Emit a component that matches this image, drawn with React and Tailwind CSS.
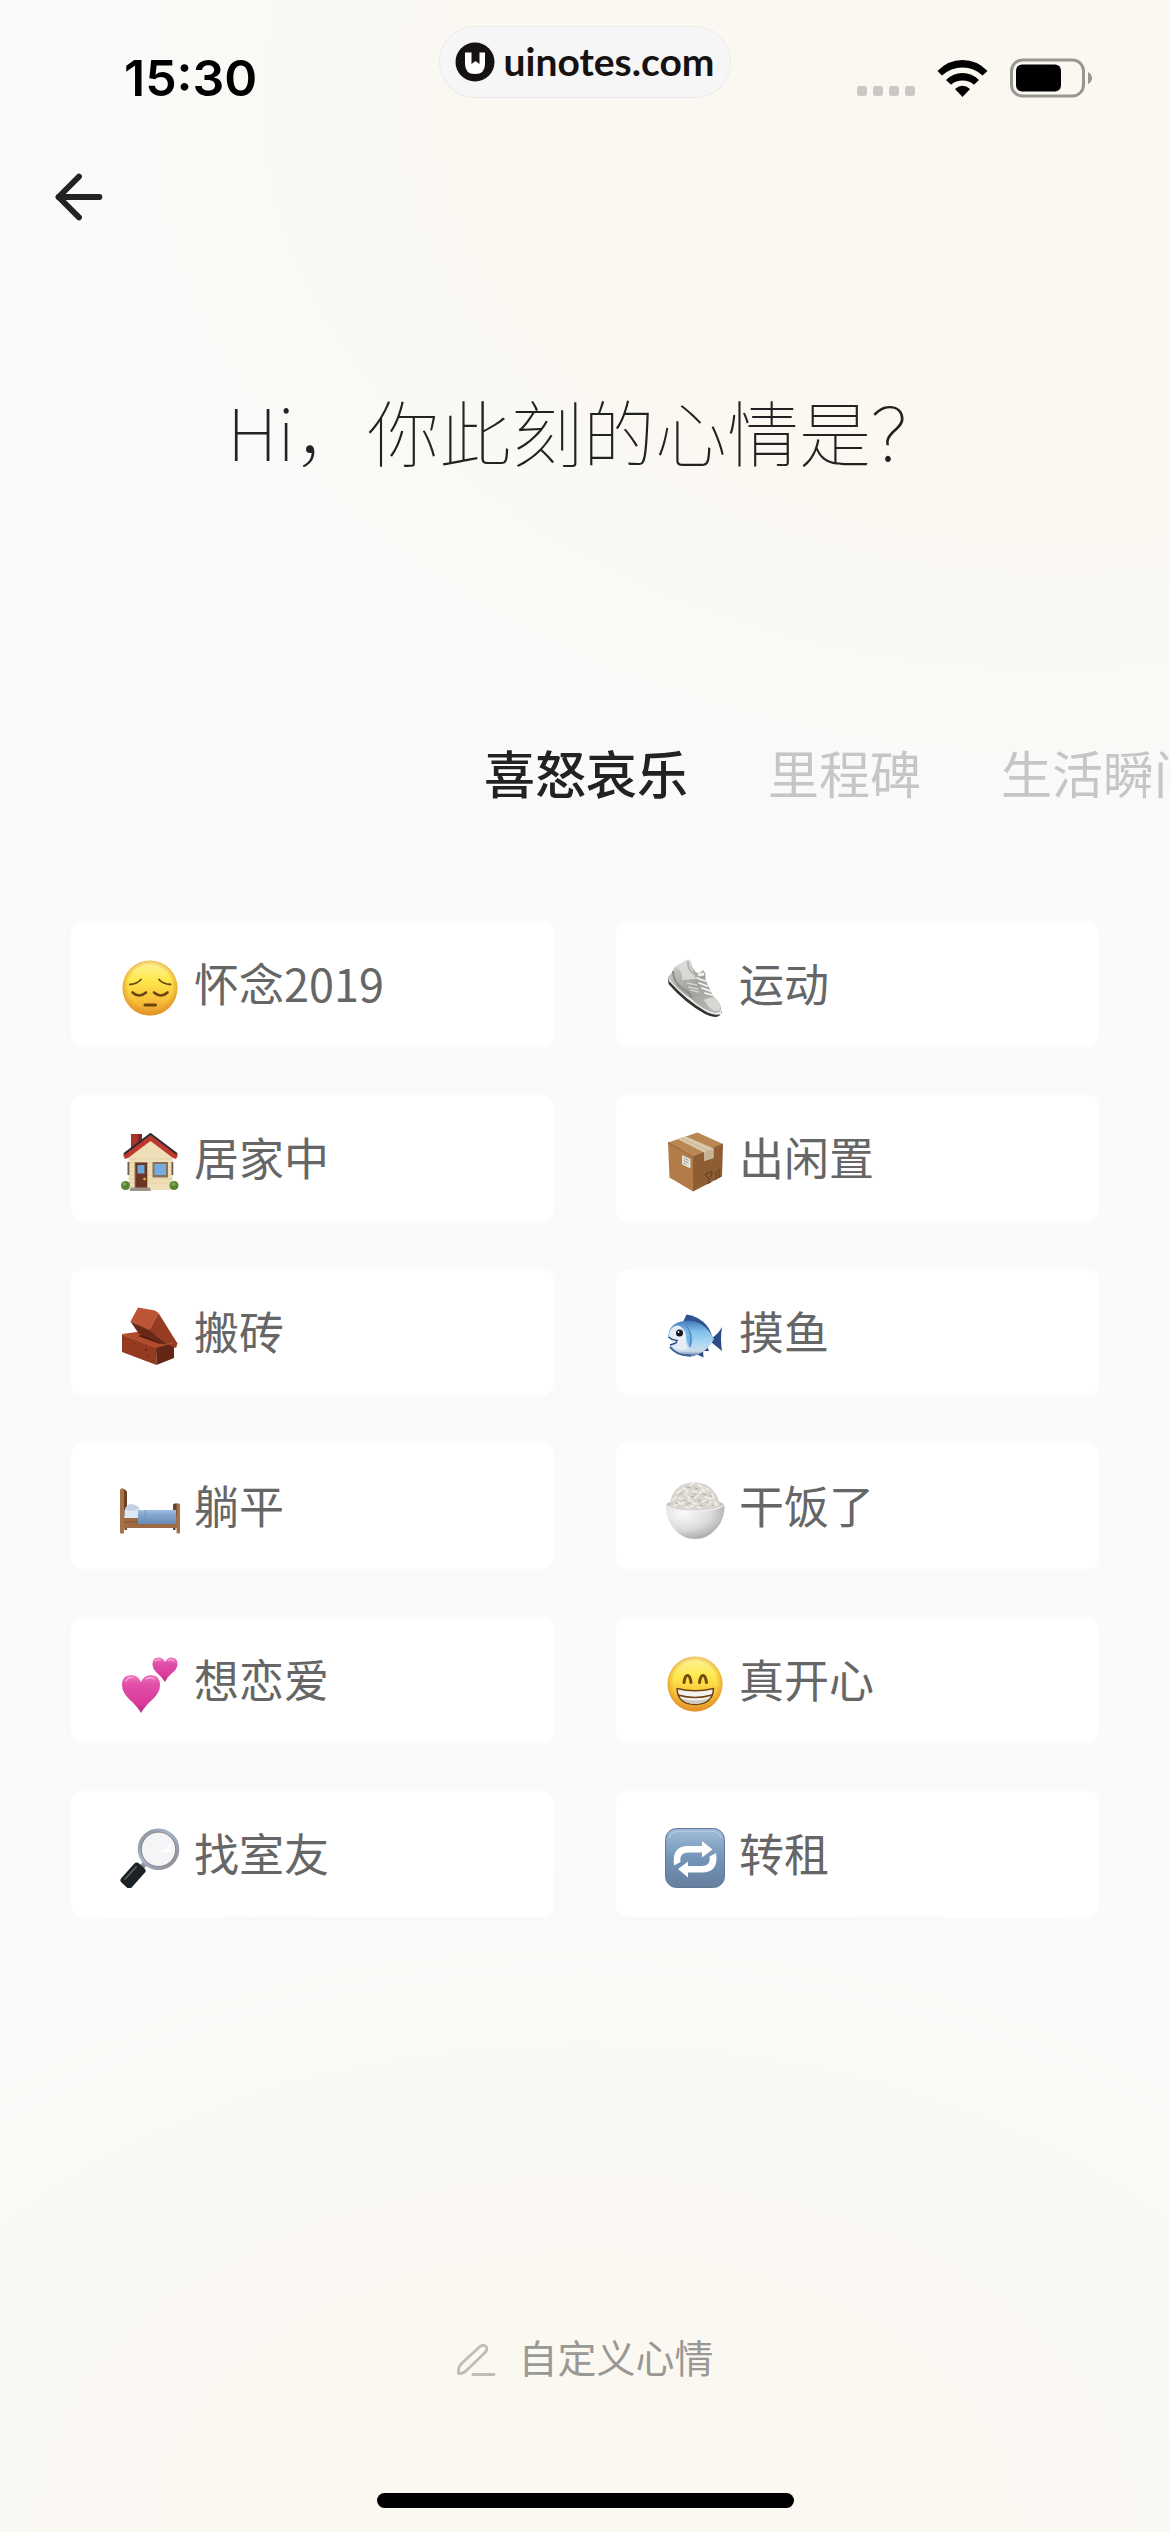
import { useState } from "react";
import { ArrowLeft } from "lucide-react";

function FaceBase({ id }) {
  return (
    <>
      <defs>
        <linearGradient id={id} x1="0" y1="0" x2="0" y2="1">
          <stop offset="0" stopColor="#fdf3a0" />
          <stop offset="0.35" stopColor="#fde94e" />
          <stop offset="0.7" stopColor="#f8c43a" />
          <stop offset="1" stopColor="#e8982c" />
        </linearGradient>
        <radialGradient id={`${id}-edge`} cx="0.5" cy="0.48" r="0.52">
          <stop offset="0.75" stopColor="#e39a2c" stopOpacity="0" />
          <stop offset="1" stopColor="#df922a" stopOpacity="0.8" />
        </radialGradient>
      </defs>
      <circle cx="30" cy="30" r="27.5" fill={`url(#${id})`} />
      <circle cx="30" cy="30" r="27.5" fill={`url(#${id}-edge)`} />
    </>
  );
}

function PensiveFace() {
  return (
    <>
      <FaceBase id="pensive" />
      <g fill="none" stroke="#6b4410" strokeLinecap="round">
        <path d="M10 26.5Q17 26 21 21.5M50.5 26.5Q43 26 39 21.5" strokeWidth="1.8" />
        <path d="M12.5 34.5Q19 40.5 26 34.5M34 34.5Q41 40.5 47.5 34.5" strokeWidth="2.6" />
        <path d="M25 47H35.5" strokeWidth="3" />
      </g>
    </>
  );
}

function Grin() {
  return (
    <>
      <FaceBase id="grin" />
      <path
        d="M19 28.5Q20 21.5 22.5 21.5Q25 21.5 26 28.5M34.5 28.5Q35.5 21.5 38 21.5Q40.5 21.5 41.5 28.5"
        fill="none"
        stroke="#76490f"
        strokeWidth="3"
        strokeLinecap="round"
      />
      <path
        d="M12 34.5Q30 39 48.5 34.5Q48 50 30 50.5Q12.5 50 12 34.5Z"
        fill="#f3f2ee"
        stroke="#6d4313"
        strokeWidth="1.5"
        strokeLinejoin="round"
      />
      <path d="M15 44Q30 56 45 44Q30 49 15 44Z" fill="#cfcbc3" />
      <path d="M13 41Q30 46 47 41" fill="none" stroke="#6d4313" strokeWidth="1.5" />
    </>
  );
}

function Shoe() {
  return (
    <>
      <defs>
        <linearGradient id="shoe" x1="0" y1="0" x2="1" y2="1">
          <stop offset="0" stopColor="#cfcfcc" />
          <stop offset="0.5" stopColor="#a3a19c" />
          <stop offset="1" stopColor="#bfbebb" />
        </linearGradient>
      </defs>
      <path d="M3 20L3.5 26Q20 45 40 56Q49 60.5 54 58L57 54Z" fill="#333" />
      <path d="M3 18L4 23Q20 41 40 53Q50 58.5 56 56L56.5 50Z" fill="#f0f0ef" />
      <path
        d="M23.5 1.5Q18 4 10 9Q7 15 3 19Q10 30 25 40Q39 53 50 55Q57 55 56 49Q54 43 48.5 39L40.5 22Q41 14 38 12Q36 15 33 15.5Q27 12 26 4Z"
        fill="url(#shoe)"
      />
      <path d="M23.5 1.5Q16 4 11 9Q18 14 17 22L31 21L28 13Q25 8 26 4Z" fill="#d9d9d7" />
      <path d="M23 3Q22 13 31 17" fill="none" stroke="#b0aeab" strokeWidth="1.5" />
      <path d="M8 13Q8 24 18 31Q24 34 27 40" fill="none" stroke="#8d8b87" strokeWidth="2" />
      <path d="M39 42Q44 39 48.5 40Q56 44 55.5 50Q55 53 50 53Q44 51 39 42Z" fill="#d9d8d6" />
      <path d="M22 25L32 27M23 29L33 31M25 32L34 34" stroke="#d5d4d1" strokeWidth="1.7" />
      <path d="M32 20L40 23M34 25L42 28M37 30L45 33M40 35L47 37" stroke="#f6f6f5" strokeWidth="1.8" strokeLinecap="round" />
      <path d="M33 17L39 16" stroke="#f1f1f0" strokeWidth="3" />
    </>
  );
}

function House() {
  return (
    <>
      <rect x="11" y="2" width="11" height="18" fill="#a8352c" />
      <rect x="18" y="2" width="4" height="18" fill="#842720" />
      <path d="M8.5 22L30.5 6L52.5 22V58H8.5Z" fill="#efdfb9" />
      <path d="M9 27H52M9 31H52M9 35H52M9 39H52M9 43H52M9 47H52M9 51H52" stroke="#decca2" strokeWidth="0.7" />
      <path d="M30.5 3L3 23L5 27L8 26L30.5 9L53 26L56 27L58 23Z" fill="#c0392f" />
      <path d="M4 22L30.5 2L57 22" fill="none" stroke="#2b282c" strokeWidth="2" />
      <rect x="7.5" y="30" width="1.8" height="13" fill="#6c5a49" />
      <rect x="51.5" y="30" width="1.8" height="13" fill="#6c5a49" />
      <rect x="14.5" y="30" width="13" height="26" fill="#9a7c5d" />
      <rect x="15.5" y="31" width="11.5" height="25" fill="#6b3524" />
      <rect x="17.5" y="33" width="7" height="8.5" fill="#6aa6dc" />
      <circle cx="24.5" cy="47" r="1.3" fill="#f0b13f" />
      <rect x="32.5" y="30" width="15.5" height="15.5" fill="#8c7157" />
      <rect x="34.5" y="32" width="11.5" height="11" fill="#72abe0" />
      <circle cx="5.5" cy="53.5" r="4.5" fill="#568433" />
      <circle cx="4.5" cy="52" r="2" fill="#7aa74c" />
      <circle cx="54" cy="53.5" r="4.5" fill="#568433" />
      <circle cx="53.5" cy="52" r="2" fill="#7aa74c" />
      <path d="M11 55.5H30L31 59H9.5Z" fill="#9c938b" />
    </>
  );
}

function Package() {
  return (
    <>
      <path d="M32.5 0.5L58 12L28 25L3 10.5Z" fill="#b98753" />
      <path d="M3 10.5L28 25V59.5L4.5 45.5Z" fill="#b17c48" />
      <path d="M28 25L58 12L57 44.5L28 59.5Z" fill="#8e5d33" />
      <path d="M3 10.5L28 25L58 12" fill="none" stroke="#84552d" strokeWidth="0.8" />
      <path d="M12.5 7L21 4.5L48.5 16.5V26L39 29V20.5Z" fill="#dac9ae" />
      <path d="M16 6L43.5 19" stroke="#c6b394" strokeWidth="1" />
      <path d="M39 20.5L48.5 16.5V26L39 29Z" fill="#c7b393" />
      <path d="M17 23L25.5 27V36.5L17 32.5Z" fill="#e5e2dc" />
      <path d="M18.5 26L23.5 28.5M18.5 28.5L23.5 31M18.5 31L21.5 32.5" stroke="#9a948b" strokeWidth="0.9" />
      <g fill="none" stroke="#5f3d20" strokeWidth="1">
        <path d="M40.5 42L47 39Q47 45 44 46L43.7 51M41.5 52L46 50M40.5 42Q41 46 44 46" />
        <path d="M51 39V48M54 37V46" />
      </g>
    </>
  );
}

function Brick() {
  return (
    <>
      <path d="M2 28L17 26L54 36L36 42Z" fill="#b14b2d" />
      <path d="M2 28L36 41.5L36.5 59L2 46Z" fill="#933a21" />
      <path d="M36 41.5L54 35.5V52L36.5 59Z" fill="#652615" />
      <path d="M18 30L24 28L45 36L40 38Z" fill="#4f1d10" />
      <path d="M10.5 15.5L29 23L49 40L38 36L19 28Z" fill="#6a2817" />
      <path d="M18 1.5L35 4.5L38.5 7L29 24L10.5 15.5Z" fill="#bc5535" />
      <path d="M38.5 7L57.5 37.5L56 42L47 38L29 24Z" fill="#963c23" />
      <path d="M3 29L36 41.5L53 36.5" fill="none" stroke="#b95a3a" strokeWidth="0.8" />
      <circle cx="26" cy="44" r="0.9" fill="#5d2112" />
      <circle cx="15" cy="38" r="0.7" fill="#5d2112" />
      <circle cx="28" cy="50" r="0.8" fill="#5d2112" />
    </>
  );
}

function Fish() {
  return (
    <>
      <defs>
        <linearGradient id="fish" x1="0" y1="0" x2="0" y2="1">
          <stop offset="0" stopColor="#4479b8" />
          <stop offset="0.3" stopColor="#82bfeb" />
          <stop offset="0.65" stopColor="#b0daf4" />
          <stop offset="0.85" stopColor="#cfdcec" />
          <stop offset="1" stopColor="#45679f" />
        </linearGradient>
      </defs>
      <path d="M17 18L21.5 8.5Q42 12 47.5 31L42 32Z" fill="#2f5490" />
      <path d="M46 32Q52 30 57 21Q55 33 57 45Q51 40 46 36Z" fill="#2d4c84" />
      <path d="M29 47L38.5 51.5L38 45L44 45L42 40Z" fill="#2d4c84" />
      <path d="M3 30Q4 17 19 15Q38 12 49 33Q41 48 26 50.5Q10 51 4.5 40L10 37Q5 35 3 30Z" fill="url(#fish)" />
      <path d="M4 29Q5 21 12 19.5Q19 20 21 30Q20 40 24 42Q16 47 6.5 40L12 38Q6 35 4 29Z" fill="#e8edf4" />
      <path d="M22 20Q29 26 27 37Q26 41 24 41Q20 31 22 20Z" fill="#71b3e2" />
      <path d="M21.5 20Q28 28 25 41" fill="none" stroke="#4879ad" strokeWidth="1" />
      <path d="M3.5 31Q7 34 12 34.5L11 37L5 39" fill="none" stroke="#2d4977" strokeWidth="1.5" />
      <path d="M5 41Q12 50 26 49.5" fill="none" stroke="#3c5e96" strokeWidth="2" />
      <circle cx="14.5" cy="27" r="3.5" fill="#111721" />
      <circle cx="13.5" cy="26" r="0.9" fill="#fff" />
    </>
  );
}

function Bed() {
  return (
    <>
      <defs>
        <linearGradient id="blanket" x1="0" y1="0" x2="0" y2="1">
          <stop offset="0" stopColor="#a3bfe0" />
          <stop offset="0.3" stopColor="#86a7ce" />
          <stop offset="1" stopColor="#668cb9" />
        </linearGradient>
      </defs>
      <path d="M1 8.5Q5 8 7 12V36H1Z" fill="#6b4126" />
      <rect x="4.5" y="43" width="2.5" height="7" fill="#6e4528" />
      <rect x="53" y="43" width="2.5" height="7" fill="#6e4528" />
      <rect x="53" y="23.5" width="7" height="14" rx="1.5" fill="#6b4126" />
      <rect x="3" y="37" width="54" height="11" fill="#9d6a43" />
      <path d="M4 42H56" stroke="#845432" strokeWidth="1" />
      <rect x="4.5" y="30" width="15" height="8" fill="#dce8f2" />
      <path d="M5 29Q7 24 11 24Q18 25 20 29Q14 32 5 30Z" fill="#c6d2e3" />
      <path d="M18 30H56V44H18Z" fill="url(#blanket)" />
      <path d="M25 30V44" stroke="#7195bf" strokeWidth="0.9" />
      <rect x="0" y="9" width="4" height="44.5" rx="1" fill="#a4714a" />
      <rect x="56.5" y="24" width="3.5" height="29.5" rx="1" fill="#a4714a" />
    </>
  );
}

function Rice() {
  return (
    <>
      <defs>
        <radialGradient id="bowl" cx="0.3" cy="0.25" r="0.8">
          <stop offset="0" stopColor="#fafafa" />
          <stop offset="0.6" stopColor="#dadada" />
          <stop offset="1" stopColor="#a7a7a7" />
        </radialGradient>
      </defs>
      <ellipse cx="30" cy="25" rx="29" ry="6" fill="#c4c3c0" />
      <path d="M5 27Q5 13 15 6Q28 -1 42 5Q54 13 55 27Q30 34 5 27Z" fill="#d8d5ce" />
      <path
        d="M12 13l4-3M18 8l4 2M25 5l4-2M33 5l4 2M41 8l3 3M47 14l2 4M8 20l3-3M14 18l4 1M20 14l3-3M27 11l4 1M34 13l4-2M40 17l4 1M49 22l3 2M9 26l4-2M17 24l3-3M23 20l4 1M30 18l3-3M37 22l4-2M43 25l3-3M25 27l4-2M32 27l4 1M13 22l3 2M45 19l3-1M20 27l3 1M28 23l4 1M37 9l3 2M22 16l3 2M50 26l2-2"
        stroke="#f2f0ea"
        strokeWidth="1.6"
        strokeLinecap="round"
      />
      <path
        d="M14 15l3-2M22 7l3 1M30 8l3 1M38 14l3 1M45 15l2 2M11 23l2 1M18 20l3 1M26 17l3-1M33 20l3 1M41 21l2 2M22 24l3-1M35 25l2 1M29 13l2 2M47 25l2 1"
        stroke="#aaa69b"
        strokeWidth="0.9"
        strokeLinecap="round"
      />
      <path d="M1 25Q8 31 30 31Q52 31 59.5 25Q60 40 50 50Q42 59 30 59Q18 59 10 50Q1 41 1 25Z" fill="url(#bowl)" />
      <path d="M1 25Q8 31 30 31Q52 31 59.5 25" fill="none" stroke="#f8f8f8" strokeWidth="1" />
    </>
  );
}

function Hearts() {
  return (
    <>
      <defs>
        <linearGradient id="hearts" x1="0" y1="0" x2="0" y2="1">
          <stop offset="0" stopColor="#ee78c0" />
          <stop offset="0.25" stopColor="#e14fa9" />
          <stop offset="0.75" stopColor="#d93a9b" />
          <stop offset="1" stopColor="#b82a80" />
        </linearGradient>
      </defs>
      <path d="M21 59Q17 52 9 45Q2 38 2 31Q2 21 11 21Q18 21 21 28Q24 21 31 21Q40 21 40 31Q40 38 33 45Q25 52 21 59Z" fill="url(#hearts)" />
      <path d="M45 28Q42 23 37 19Q32.5 15 32.5 10Q32.5 3.5 38 3.5Q43 3.5 45 8Q47 3.5 51.5 3.5Q57.5 3.5 57.5 10Q57.5 15 52 19Q47 23 45 28Z" fill="url(#hearts)" />
      <path
        d="M6 27Q8 23 12 23.5M26 25Q30 22.5 34 25M35 7Q37 5 40 6M48 6.5Q51 4.5 54 7"
        fill="none"
        stroke="#f9a9d9"
        strokeWidth="1.3"
        strokeLinecap="round"
      />
    </>
  );
}

function Magnifier() {
  return (
    <>
      <defs>
        <linearGradient id="rim" x1="0" y1="0" x2="1" y2="1">
          <stop offset="0" stopColor="#8b8d92" />
          <stop offset="0.4" stopColor="#a9b6cc" />
          <stop offset="1" stopColor="#8a8a8f" />
        </linearGradient>
      </defs>
      <path d="M27 33L21 40" stroke="#8c9095" strokeWidth="5" />
      <rect x="-7" y="-13" width="14" height="26" rx="3.5" transform="translate(13 47.5) rotate(42)" fill="#1c2125" />
      <path d="M16 39L5 51" stroke="#566067" strokeWidth="1.8" strokeLinecap="round" />
      <circle cx="38.5" cy="21.3" r="19" fill="#f5f5f7" stroke="url(#rim)" strokeWidth="3.6" />
      <circle cx="38.5" cy="21.3" r="17.2" fill="none" stroke="#6e7076" strokeWidth="0.8" />
      <path d="M41 24L51 16L50 24Z" fill="#fff" />
    </>
  );
}

function Repeat() {
  return (
    <>
      <defs>
        <linearGradient id="repeat" x1="0" y1="0" x2="0" y2="1">
          <stop offset="0" stopColor="#a2bcd9" />
          <stop offset="0.5" stopColor="#7395b8" />
          <stop offset="1" stopColor="#687e9f" />
        </linearGradient>
      </defs>
      <rect x="0.5" y="0.5" width="59" height="59" rx="11" fill="url(#repeat)" stroke="#607998" />
      <path d="M4 10Q6 3.5 12 3.5H48Q54 3.5 56 10" fill="none" stroke="#b4c9e1" strokeWidth="1.2" />
      <g fill="#fff">
        <path d="M9 37.5Q6.5 18 23 18H37V13L47.5 21.5L37 29.5V24.5H24Q14 24.5 15.5 34Z" />
        <path d="M51 25Q54 44.5 37 44.5H23V49.5L13 41L23 33.5V38H36Q46 38 44.5 28.5Z" />
      </g>
    </>
  );
}

const tabs = ["喜怒哀乐", "里程碑", "生活瞬间"];

const moods = [
  { name: "怀念2019", Icon: PensiveFace },
  { name: "运动", Icon: Shoe },
  { name: "居家中", Icon: House },
  { name: "出闲置", Icon: Package },
  { name: "搬砖", Icon: Brick },
  { name: "摸鱼", Icon: Fish },
  { name: "躺平", Icon: Bed },
  { name: "干饭了", Icon: Rice },
  { name: "想恋爱", Icon: Hearts },
  { name: "真开心", Icon: Grin },
  { name: "找室友", Icon: Magnifier },
  { name: "转租", Icon: Repeat },
];

function StatusBar() {
  return (
    <header className="grid grid-cols-[1fr_auto_1fr] items-start pt-[26px]">
      <div className="mt-4 flex h-[72px] items-center pl-[124px] font-[Inter,sans-serif] text-[50px] leading-none font-semibold text-black">
        15:30
      </div>

      <a
        href="#"
        className="flex h-[72px] items-center gap-2 rounded-full border border-dotted border-[#dedede] bg-[#f6f6f6] px-[15px] font-[Lato,sans-serif] text-[39px] leading-none font-bold text-[#171212]"
      >
        <svg viewBox="0 0 40 40" className="size-10">
          <circle cx="20" cy="20" r="19.5" fill="#171212" />
          <path d="M10 10.5H16.5V22L20.5 19L24.5 22V10.5H30V22Q30 32 20 32Q10 32 10 22Z" fill="#fff" />
        </svg>
        <span className="pb-0.5">uinotes.com</span>
      </a>

      <div className="mt-4 flex h-[72px] items-center justify-end pr-[77px]">
        <div className="mt-[26px] mr-[22px] flex gap-1.5">
          <span className="size-2.5 rounded-[3px] bg-[#cac8c4]" />
          <span className="size-2.5 rounded-[3px] bg-[#cac8c4]" />
          <span className="size-2.5 rounded-[3px] bg-[#cac8c4]" />
          <span className="size-2.5 rounded-[3px] bg-[#cac8c4]" />
        </div>
        <svg viewBox="0 0 51 37" className="mr-[22px] h-[37px] w-[51px]">
          <path d="M0.5 11Q11 0 25.5 0Q40 0 50.5 11L45.5 15.5Q37 7.5 25.5 7.5Q14 7.5 5 15.5Z" />
          <path d="M9 20Q16 13 25.5 13Q35 13 42 20L37 24.7Q32 20.5 25.5 20.5Q19 20.5 14 24.7Z" />
          <path d="M18 29Q25.5 22.5 33 29L25.5 37Z" />
        </svg>
        <svg viewBox="0 0 83 40" className="h-10 w-[83px]">
          <rect x="1.5" y="2" width="72" height="36" rx="11" fill="none" stroke="#989691" strokeWidth="3" />
          <rect x="6" y="6.5" width="45" height="27" rx="6" />
          <path d="M78 14Q82 16 82 20Q82 24 78 26Z" fill="#989691" />
        </svg>
      </div>
    </header>
  );
}

export default function App() {
  const [active, setActive] = useState(tabs[0]);

  return (
    <div className="flex min-h-screen flex-col bg-[#fafafa] bg-[radial-gradient(ellipse_90%_30%_at_90%_4%,#fbf8f1_0%,#fbf8f1_50%,#fbf8f100_100%),radial-gradient(ellipse_100%_30%_at_50%_100%,#fbf8f2_0%,#fbf8f2_30%,#fbf8f200_100%)] font-['Noto_Sans_CJK_SC',sans-serif]">
      <StatusBar />

      <nav className="px-11 pt-12">
        <button type="button" aria-label="返回" className="block text-[#222]">
          <ArrowLeft size={70} strokeWidth={2} />
        </button>
      </nav>

      <h1 className="mt-[146px] text-center text-[72px] leading-[104px] font-thin text-[#222]">
        Hi，你此刻的心情是？
      </h1>

      <div
        role="tablist"
        className="mt-[252px] flex gap-20 overflow-x-auto pl-[calc(50%-101px)] text-[51px] leading-[76px] whitespace-nowrap [scrollbar-width:none]"
      >
        {tabs.map((tab) => (
          <button
            key={tab}
            type="button"
            role="tab"
            aria-selected={tab === active}
            onClick={() => setActive(tab)}
            className={
              tab === active
                ? "shrink-0 font-medium text-[#222]"
                : "shrink-0 text-[#c6c6c6]"
            }
          >
            {tab}
          </button>
        ))}
      </div>

      <main className="mt-[111px] grid grid-cols-2 gap-x-[62px] gap-y-12 px-[71px]">
        {moods.map(({ name, Icon }) => (
          <button
            key={name}
            type="button"
            className="flex h-[126px] items-center gap-3.5 rounded-xl bg-white pl-[49px] text-[45px] text-[#666]"
          >
            <svg viewBox="0 0 60 60" className="mt-2 size-[60px]" aria-hidden="true">
              <Icon />
            </svg>
            <span className="pb-0.5">{name}</span>
          </button>
        ))}
      </main>

      <footer className="mt-auto flex flex-col items-center gap-[108px] pb-6">
        <button type="button" className="flex items-center gap-[22px] text-[39px] leading-[58px] text-[#999894]">
          <svg
            viewBox="0 0 40 34"
            className="mt-2 h-[34px] w-10"
            fill="none"
            stroke="#bfbdb9"
            strokeWidth="2.8"
            strokeLinecap="round"
            strokeLinejoin="round"
          >
            <path d="M2.5 30.5Q2 24 5 21L24 3.5Q27.5 1 30 3.5Q32 6 29.5 9L11 27Q7.5 31 2.5 30.5Z" />
            <path d="M17 31.5H38" />
          </svg>
          自定义心情
        </button>
        <div className="h-[15px] w-[417px] rounded-full bg-black" />
      </footer>
    </div>
  );
}
